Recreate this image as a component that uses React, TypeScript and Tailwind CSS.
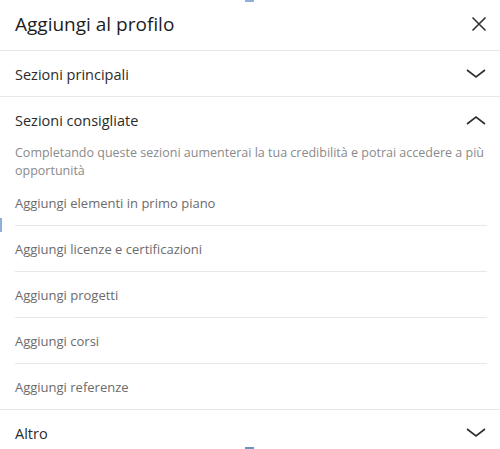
const ITEMS = [
  "Aggiungi elementi in primo piano",
  "Aggiungi licenze e certificazioni",
  "Aggiungi progetti",
  "Aggiungi corsi",
  "Aggiungi referenze",
];

function Chevron({ up }: { up?: boolean }) {
  return (
    <svg width="22" height="12" viewBox="0 0 22 12" className="text-[#2f2f2f]">
      <path
        d={up ? "M2 10 L11 3 L20 10" : "M2 2 L11 9 L20 2"}
        fill="none"
        stroke="currentColor"
        strokeWidth="1.6"
      />
    </svg>
  );
}

export default function App() {
  return (
    <div className="relative w-[500px] h-[449px] overflow-hidden bg-white font-['Open_Sans','Noto_Sans',sans-serif]">
      {/* Header */}
      <div className="flex h-[51px] items-center justify-between pl-[15px] pr-[13px] border-b border-[#e8e8e8]">
        <h2 className="text-[19px] text-[#1d1d1d] leading-none pb-[1px]">Aggiungi al profilo</h2>
        <svg width="16" height="16" viewBox="0 0 16 16" className="text-[#333] mb-[2px]">
          <path d="M1.5 1.5 L14.5 14.5 M14.5 1.5 L1.5 14.5" stroke="currentColor" strokeWidth="1.6" />
        </svg>
      </div>

      {/* Sezioni principali */}
      <div className="flex h-[46px] items-center justify-between pl-[15px] pr-[13px] border-b border-[#e8e8e8]">
        <span className="pt-[2px] text-[14.5px] text-[#2b2b2b]">Sezioni principali</span>
        <Chevron />
      </div>

      {/* Sezioni consigliate */}
      <div className="border-b border-[#e8e8e8]">
        <div className="flex h-[46px] items-center justify-between pl-[15px] pr-[13px]">
          <span className="pt-[1px] text-[14.5px] text-[#2b2b2b]">Sezioni consigliate</span>
          <Chevron up />
        </div>
        <p className="px-[15px] pt-[1px] h-[37px] text-[12.5px] leading-[18px] text-[#8a8a8a]">
          Completando queste sezioni aumenterai la tua credibilità e potrai accedere a più opportunità
        </p>
        <ul className="px-[15px] pr-[13px]">
          {ITEMS.map((item, i) => (
            <li
              key={item}
              className={
                i < ITEMS.length - 1
                  ? "flex h-[46px] items-center pt-[2px] border-b border-[#e8e8e8] text-[13px] text-[#6b6b6b]"
                  : "flex h-[45px] items-center pt-[2px] text-[13px] text-[#6b6b6b]"
              }
            >
              {item}
            </li>
          ))}
        </ul>
      </div>

      {/* Altro */}
      <div className="flex h-[46px] items-center justify-between pl-[15px] pr-[13px]">
        <span className="pt-[1px] text-[14.5px] text-[#2b2b2b]">Altro</span>
        <Chevron />
      </div>

      {/* scroll artifacts */}
      <div className="absolute left-[245px] top-0 h-[2px] w-[9px] bg-[#8fb0d6]" />
      <div className="absolute left-0 top-[218px] h-[14px] w-[2px] bg-[#8fb0d6]" />
      <div className="absolute left-[245px] top-[447px] h-[2px] w-[9px] bg-[#6e93c2]" />
    </div>
  );
}
